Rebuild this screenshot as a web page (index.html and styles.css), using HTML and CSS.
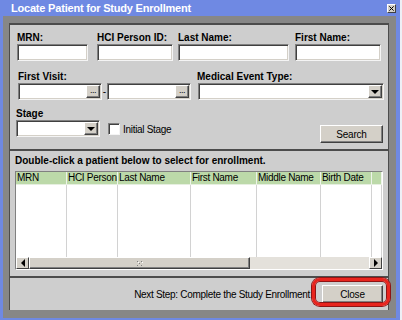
FILE: index.html
```html
<!DOCTYPE html>
<html>
<head>
<meta charset="utf-8">
<link rel="stylesheet" href="styles.css">
</head>
<body>
<div class="window">
  <div class="titlebar">
    <span class="title">Locate Patient for Study Enrollment</span>
    <span class="xbtn"><svg width="7" height="7" viewBox="0 0 7 7"><path d="M0.5 0.5 L6.5 6.5 M6.5 0.5 L0.5 6.5" stroke="#000" stroke-width="1.4"/></svg></span>
  </div>
  <div class="frame">
    <div class="panel form">
      <div class="row1">
        <div class="field"><div class="lbl">MRN:</div><div class="tb w-mrn"></div></div>
        <div class="field"><div class="lbl">HCI Person ID:</div><div class="tb w-hci"></div></div>
        <div class="field"><div class="lbl">Last Name:</div><div class="tb w-last"></div></div>
        <div class="field"><div class="lbl">First Name:</div><div class="tb w-first"></div></div>
      </div>
      <div class="row2">
        <div class="visit">
          <div class="lbl">First Visit:</div>
          <div class="dates">
            <div class="tb date"><span class="dots">...</span></div>
            <span class="dash">-</span>
            <div class="tb date"><span class="dots">...</span></div>
          </div>
        </div>
        <div class="event">
          <div class="lbl">Medical Event Type:</div>
          <div class="tb combo w-event"><span class="arrow"><i class="tri"></i></span></div>
        </div>
      </div>
      <div class="row3">
        <div class="stage">
          <div class="lbl">Stage</div>
          <div class="tb combo w-stage"><span class="arrow"><i class="tri"></i></span></div>
        </div>
        <label class="check"><span class="box"></span><span>Initial Stage</span></label>
        <div class="btn search">Search</div>
      </div>
    </div>
    <div class="panel results">
      <div class="heading">Double-click a patient below to select for enrollment.</div>
      <div class="table">
        <div class="cols">
          <div class="col c1"><div class="th">MRN</div><div class="td"></div></div>
          <div class="col c2"><div class="th">HCI Person</div><div class="td"></div></div>
          <div class="col c3"><div class="th">Last Name</div><div class="td"></div></div>
          <div class="col c4"><div class="th">First Name</div><div class="td"></div></div>
          <div class="col c5"><div class="th">Middle Name</div><div class="td"></div></div>
          <div class="col c6"><div class="th">Birth Date</div><div class="td"></div></div>
          <div class="col c7"><div class="th"></div><div class="td"></div></div>
        </div>
        <div class="hscroll">
          <span class="sbtn"><i class="tri-l"></i></span>
          <span class="thumb"><svg width="6" height="5" viewBox="0 0 6 5"><g fill="#808080"><rect x="0" y="0" width="1" height="1"/><rect x="4" y="0" width="1" height="1"/><rect x="2" y="2" width="1" height="1"/><rect x="0" y="4" width="1" height="1"/><rect x="4" y="4" width="1" height="1"/></g><g fill="#fff"><rect x="1" y="1" width="1" height="1"/><rect x="5" y="1" width="1" height="1"/></g></svg></span>
          <span class="track"></span>
          <span class="sbtn"><i class="tri-r"></i></span>
        </div>
      </div>
    </div>
    <div class="panel footer">
      <span class="next">Next Step: Complete the Study Enrollment</span>
      <div class="close-wrap">
        <div class="btn close">Close</div>
        <span class="highlight"></span>
      </div>
    </div>
  </div>
</div>
</body>
</html>
```

FILE: styles.css
```css
* { box-sizing: border-box; margin: 0; padding: 0; }
body {
  width: 402px; height: 320px; overflow: hidden;
  background: #eef0f6;
  font-family: "Liberation Sans", Arial, sans-serif;
  font-size: 10px; color: #000;
}
.window {
  width: 400px; height: 320px;
  background: #6f89e3;
  display: flex; flex-direction: column;
}
.titlebar {
  height: 16px; flex: none;
  display: flex; align-items: center; justify-content: space-between;
  padding: 0 4px 0 11px;
}
.title { color: #fff; font-weight: bold; font-size: 11px; letter-spacing: -0.2px; }
.xbtn {
  width: 9px; height: 9px;
  background: #d4d0c8;
  border: 1px solid; border-color: #fff #404040 #404040 #fff;
  display: flex; align-items: center; justify-content: center;
}
.xbtn svg { width: 5px; height: 5px; }
.frame {
  flex: 1;
  margin: 0 4px 2px 3px;
  background: #878787;
  padding: 7px 7px 8px 6px;
  display: flex; flex-direction: column;
}
.panel {
  background: #cecece;
  border-top: 2px solid #4c4c4c;
  border-left: 1px solid #4c4c4c;
  border-right: 1px solid #4c4c4c;
}
.lbl { font-weight: bold; line-height: 11px; height: 11px; margin-bottom: 1px; white-space: nowrap; }
.tb {
  height: 17px; background: #fff;
  border: 1px solid; border-color: #808080 #f4f4f4 #f4f4f4 #808080;
  box-shadow: inset 1px 1px 0 #404040, inset -1px -1px 0 #d4d0c8;
}

/* form */
.form { height: 126px; padding: 7px 5px 0 7px; flex: none; }
.row1 { display: grid; grid-template-columns: 80px 81px 117px 86px; }
.w-mrn { width: 71px; }
.w-hci { width: 76px; }
.w-last { width: 111px; }
.w-first { width: 86px; }
.row2 { display: flex; margin-top: 10px; }
.visit { margin-left: 1px; width: 173px; }
.dates { display: flex; align-items: center; }
.date {
  width: 84px; background: #fff;
  display: flex; justify-content: flex-end; align-items: center;
  padding: 1px 1px 1px 0;
}
.dash { width: 5px; text-align: center; line-height: 10px; }
.dots {
  width: 14px; height: 13px;
  background: #d4d0c8;
  border: 1px solid; border-color: #fff #404040 #404040 #fff;
  box-shadow: inset -1px -1px 0 #808080;
  font-size: 9px; line-height: 8px; text-align: center; letter-spacing: -0.5px;
}
.event { margin-left: 6px; }
.w-event { width: 186px; margin-left: 1px; }
.combo { display: flex; justify-content: flex-end; align-items: center; padding: 1px 1px 1px 0; }
.arrow {
  width: 14px; height: 13px;
  background: #d4d0c8;
  border: 1px solid; border-color: #fff #404040 #404040 #fff;
  box-shadow: inset -1px -1px 0 #808080;
  display: flex; align-items: center; justify-content: center;
}
.tri { width: 0; height: 0; border-left: 4px solid transparent; border-right: 4px solid transparent; border-top: 4px solid #000; }
.row3 { display: flex; align-items: flex-start; margin-top: 8px; margin-left: -1px; }
.w-stage { width: 84px; }
.check { display: flex; align-items: center; margin-top: 15px; margin-left: 8px; letter-spacing: -0.3px; }
.box {
  width: 12px; height: 12px; background: #fff; margin-right: 3px;
  border: 1px solid; border-color: #808080 #f4f4f4 #f4f4f4 #808080;
  box-shadow: inset 1px 1px 0 #404040;
}
.btn {
  width: 62px; height: 18px;
  background: #d4d0c8;
  border: 1px solid; border-color: #fff #404040 #404040 #fff;
  box-shadow: inset -1px -1px 0 #808080;
  display: flex; align-items: center; justify-content: center;
  letter-spacing: -0.2px;
}
.search { margin-left: auto; margin-top: 17px; width: 63px; }

/* results */
.results { height: 127px; flex: none; padding: 4px 5px 0 5px; }
.heading { font-weight: bold; line-height: 11px; margin-bottom: 5px; white-space: nowrap; }
.table {
  width: 368px; height: 99px;
  border: 1px solid; border-color: #808080 #fff #fff #808080;
  background: #fff;
  display: flex; flex-direction: column;
}
.cols { display: flex; height: 85px; }
.col { display: flex; flex-direction: column; }
.c1 { width: 51px; } .c2 { width: 51px; } .c3 { width: 73px; }
.c4 { width: 66px; } .c5 { width: 64px; } .c6 { width: 51px; } .c7 { width: 10px; }
.th {
  height: 13px; background: #bcd9a9;
  border-right: 1px solid #eef4ea; border-bottom: 1px solid #e6efe0;
  line-height: 12px; padding-left: 1px; white-space: nowrap; overflow: hidden;
  letter-spacing: -0.3px;
}
.td { flex: 1; border-right: 1px solid #d2d2d2; }
.hscroll { height: 12px; display: flex; background: #e4e1db; }
.sbtn {
  width: 13px; height: 12px;
  background: #d4d0c8;
  border: 1px solid; border-color: #fff #404040 #404040 #fff;
  display: flex; align-items: center; justify-content: center;
}
.tri-l { width: 0; height: 0; border-top: 4px solid transparent; border-bottom: 4px solid transparent; border-right: 4px solid #000; }
.tri-r { width: 0; height: 0; border-top: 4px solid transparent; border-bottom: 4px solid transparent; border-left: 4px solid #000; }
.thumb {
  width: 221px; height: 12px;
  background: #d4d0c8;
  border: 1px solid; border-color: #fff #404040 #404040 #fff;
  box-shadow: inset -1px -1px 0 #808080;
  display: flex; align-items: center; justify-content: center;
}
.track { flex: 1; }

/* footer */
.footer {
  flex: 1;
  display: flex; align-items: center; justify-content: flex-end;
  padding-right: 5px;
}
.next { letter-spacing: -0.3px; margin-right: 12px; white-space: nowrap; }
.close-wrap { position: relative; }
.close { width: 61px; }
.highlight {
  position: absolute; left: -10px; top: -7px; right: -7px; bottom: -3px;
  border: 3px solid #e8241e; border-radius: 8px;
  box-shadow: 0 0 0 1px #8e1414, inset 0 0 0 1px #8e1414;
}
```
